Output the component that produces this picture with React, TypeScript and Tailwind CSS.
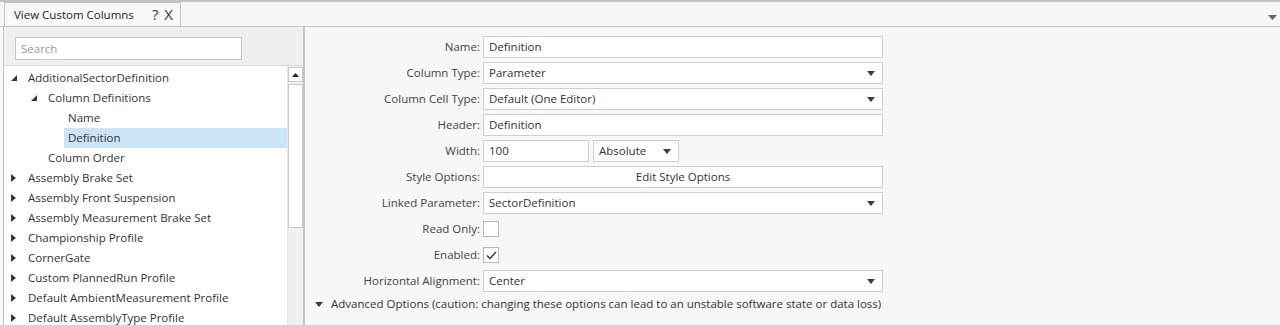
import React from "react";

const Tri = ({ dir }: { dir: "down" | "right" | "dl" | "up" }) => {
  if (dir === "right")
    return (
      <svg width="5" height="8" viewBox="0 0 5 8" className="block">
        <path d="M0 0 L5 4 L0 8 Z" fill="#3a3a3a" />
      </svg>
    );
  if (dir === "dl")
    return (
      <svg width="6" height="6" viewBox="0 0 6 6" className="block">
        <path d="M6 0 L6 6 L0 6 Z" fill="#3a3a3a" />
      </svg>
    );
  if (dir === "up")
    return (
      <svg width="7" height="4" viewBox="0 0 7 4" className="block">
        <path d="M0 4 L3.5 0 L7 4 Z" fill="#222" />
      </svg>
    );
  return (
    <svg width="8" height="5" viewBox="0 0 8 5" className="block">
      <path d="M0 0 L8 0 L4 5 Z" fill="#3c3c3c" />
    </svg>
  );
};

const treeItems: { text: string; level: number; icon?: "dl" | "right"; sel?: boolean }[] = [
  { text: "AdditionalSectorDefinition", level: 0, icon: "dl" },
  { text: "Column Definitions", level: 1, icon: "dl" },
  { text: "Name", level: 2 },
  { text: "Definition", level: 2, sel: true },
  { text: "Column Order", level: 1 },
  { text: "Assembly Brake Set", level: 0, icon: "right" },
  { text: "Assembly Front Suspension", level: 0, icon: "right" },
  { text: "Assembly Measurement Brake Set", level: 0, icon: "right" },
  { text: "Championship Profile", level: 0, icon: "right" },
  { text: "CornerGate", level: 0, icon: "right" },
  { text: "Custom PlannedRun Profile", level: 0, icon: "right" },
  { text: "Default AmbientMeasurement Profile", level: 0, icon: "right" },
  { text: "Default AssemblyType Profile", level: 0, icon: "right" },
];

const Input = ({ value, w = "w-[400px]" }: { value: string; w?: string }) => (
  <div className={`${w} h-[22px] bg-white border border-[#cfcfcf] flex items-center px-[5px] text-[#333]`}>
    {value}
  </div>
);

const Select = ({ value, w = "w-[400px]" }: { value: string; w?: string }) => (
  <div className={`${w} h-[22px] bg-white border border-[#cfcfcf] flex items-center justify-between pl-[5px] pr-[7px] text-[#333]`}>
    <span>{value}</span>
    <Tri dir="down" />
  </div>
);

const Check = ({ checked }: { checked?: boolean }) => (
  <div className="w-[16px] h-[16px] bg-white border border-[#b9b9b9] flex items-center justify-center">
    {checked && (
      <svg width="11" height="9" viewBox="0 0 11 9">
        <path d="M1 4.5 L4 7.5 L10 1" stroke="#333" strokeWidth="1.4" fill="none" />
      </svg>
    )}
  </div>
);

const Row = ({ label, children }: { label: string; children: React.ReactNode }) => (
  <div className="flex items-center h-[26px]">
    <div className="w-[178px] text-right pr-[3px] text-[#444]">{label}</div>
    {children}
  </div>
);

export default function App() {
  return (
    <div
      className="w-[1280px] h-[325px] overflow-hidden bg-[#f7f7f7] text-[11.5px] text-[#333] flex flex-col"
      style={{ fontFamily: '"Open Sans", "Noto Sans", sans-serif' }}
    >
      <div className="border-t-2 border-[#c4c4c4] h-[26px] flex items-end justify-between shrink-0">
        <div className="ml-[4px] h-[24px] w-[177px] border border-b-0 border-[#c4c4c4] bg-[#f9f9f9] flex items-center pl-[9px] pr-[6px] justify-between text-[#222]">
          <span>View Custom Columns</span>
          <span className="text-[15px] tracking-[1px] text-[#333]">? X</span>
        </div>
        <div className="mb-[6px] mr-[3px]">
          <svg width="9" height="5" viewBox="0 0 9 5" className="block">
            <path d="M0 0 L9 0 L4.5 5 Z" fill="#666" />
          </svg>
        </div>
      </div>
      <div className="flex flex-1 border-t border-[#c4c4c4] min-h-0">
        <div className="ml-[3px] w-[302px] border-l border-r-2 border-[#c4c4c4] bg-[#efefef] flex flex-col">
          <div className="h-[38px] pl-[11px] pt-[10px] shrink-0">
            <div className="w-[227px] h-[23px] bg-white border border-[#c8c8c8] flex items-center px-[5px] text-[#9a9a9a]">
              Search
            </div>
          </div>
          <div className="flex flex-1 min-h-0 border-t border-[#dadada]">
            <div className="flex-1 bg-white pt-[2px]">
              {treeItems.map((it, i) => (
                <div key={i} className="h-[20px] flex items-center" style={{ paddingLeft: it.level * 20 }}>
                  <div className="w-[20px] flex items-center pl-[7px]">
                    {it.icon === "dl" && <Tri dir="dl" />}
                    {it.icon === "right" && <Tri dir="right" />}
                  </div>
                  <div className={`flex-1 h-full flex items-center pl-[4px] text-[#333] ${it.sel ? "bg-[#cce4f7]" : ""}`}>
                    {it.text}
                  </div>
                </div>
              ))}
            </div>
            <div className="w-[16px] bg-[#f0f0f0] pt-[1px] flex flex-col items-center gap-[2px] border-l border-[#e6e6e6]">
              <div className="w-[15px] h-[15px] bg-white border border-[#c8c8c8] flex items-center justify-center">
                <Tri dir="up" />
              </div>
              <div className="w-[15px] h-[144px] bg-white border border-[#c8c8c8]" />
            </div>
          </div>
        </div>
        <div className="flex-1 pt-[7px]">
          <Row label="Name:"><Input value="Definition" /></Row>
          <Row label="Column Type:"><Select value="Parameter" /></Row>
          <Row label="Column Cell Type:"><Select value="Default (One Editor)" /></Row>
          <Row label="Header:"><Input value="Definition" /></Row>
          <Row label="Width:">
            <div className="flex gap-[4px]">
              <Input value="100" w="w-[106px]" />
              <Select value="Absolute" w="w-[86px]" />
            </div>
          </Row>
          <Row label="Style Options:">
            <div className="w-[400px] h-[22px] bg-white border border-[#cfcfcf] flex items-center justify-center text-[#333]">
              Edit Style Options
            </div>
          </Row>
          <Row label="Linked Parameter:"><Select value="SectorDefinition" /></Row>
          <Row label="Read Only:"><Check /></Row>
          <Row label="Enabled:"><Check checked /></Row>
          <Row label="Horizontal Alignment:"><Select value="Center" /></Row>
          <div className="flex items-center h-[20px] pl-[10px] gap-[8px] text-[#333]">
            <Tri dir="down" />
            <span>Advanced Options (caution: changing these options can lead to an unstable software state or data loss)</span>
          </div>
        </div>
      </div>
    </div>
  );
}
